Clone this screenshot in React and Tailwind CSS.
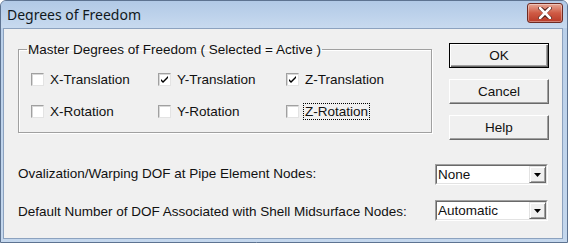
const CHECKS = [
  [
    { label: 'X-Translation', checked: false },
    { label: 'Y-Translation', checked: true },
    { label: 'Z-Translation', checked: true },
  ],
  [
    { label: 'X-Rotation', checked: false },
    { label: 'Y-Rotation', checked: false },
    { label: 'Z-Rotation', checked: false, focus: true },
  ],
];

function CheckBox({ label, checked, focus }) {
  return (
    <div className="flex items-center">
      <span className="w-[13px] h-[13px] border border-t-[#a0a0a0] border-l-[#a0a0a0] border-r-[#e3e3e3] border-b-[#e3e3e3] bg-white flex items-center justify-center shrink-0 shadow-[inset_1px_1px_0_#d8d8d8]">
        {checked && (
          <svg width="9" height="9" viewBox="0 0 9 9">
            <path d="M1 4 L3 6 L8 1 L8 3 L3 8 L1 6 Z" fill="#000" />
          </svg>
        )}
      </span>
      <span className={`ml-[5px] leading-[15px] px-[1px] ${focus ? 'outline outline-1 outline-dotted outline-black' : ''}`}>
        {label}
      </span>
    </div>
  );
}

function Button({ children, primary }) {
  return (
    <button
      className={`w-[100px] h-[25px] bg-[#f0f0f0] leading-none font-normal ${
        primary
          ? 'border border-black shadow-[inset_1px_1px_0_#fff,inset_-1px_-1px_0_#696969,inset_-2px_-2px_0_#a0a0a0]'
          : 'border border-t-white border-l-white border-r-[#696969] border-b-[#696969] shadow-[inset_-1px_-1px_0_#a0a0a0]'
      }`}
    >
      {children}
    </button>
  );
}

function Select({ value }) {
  return (
    <div className="w-[113px] h-[21px] flex border border-t-[#a0a0a0] border-l-[#a0a0a0] border-r-white border-b-white">
      <div className="flex-1 flex items-center bg-white border border-t-[#696969] border-l-[#696969] border-r-[#e3e3e3] border-b-[#e3e3e3]">
        <span className="flex-1 pl-[1px] leading-none">{value}</span>
        <span className="w-[17px] h-full bg-[#f0f0f0] flex items-center justify-center border border-t-[#e3e3e3] border-l-[#e3e3e3] border-r-[#696969] border-b-[#696969] shadow-[inset_1px_1px_0_#fff,inset_-1px_-1px_0_#a0a0a0]">
          <svg width="7" height="4" viewBox="0 0 7 4">
            <path d="M0 0 H7 L3.5 4 Z" fill="#000" />
          </svg>
        </span>
      </div>
    </div>
  );
}

export default function App() {
  return (
    <div className="w-[568px] h-[243px] flex flex-col bg-gradient-to-b from-[#b9cfe9] to-[#c4d7ed] border border-[#5d7391] rounded-t-[6px] overflow-hidden font-['Liberation_Sans',Arial,sans-serif] text-[13.5px] text-[#111]">
      <div className="h-[27px] flex items-center justify-between pl-[6px] pr-[4px] bg-gradient-to-b from-[#b1c9e6] to-[#c8daef]">
        <span className="font-['Noto_Sans',sans-serif] text-[14px] text-[#101820]">Degrees of Freedom</span>
        <div className="w-[36px] h-[20px] mt-[-3px] rounded-[3px] border border-[#6e2a22] bg-gradient-to-b from-[#e4a796] via-[#cf5a44] to-[#b83a28] flex items-center justify-center shadow-[inset_0_0_0_1px_rgba(255,255,255,0.35)]">
          <svg width="14" height="12" viewBox="0 0 14 12">
            <path d="M2 1 L7 5 L12 1 M2 11 L7 7 L12 11 M7 5 L7 7" stroke="#4a1a14" strokeWidth="4" fill="none" strokeLinecap="round" />
            <path d="M2 1 L12 11 M12 1 L2 11" stroke="#fff" strokeWidth="2.6" fill="none" strokeLinecap="round" />
          </svg>
        </div>
      </div>

      <div className="flex-1 ml-[2px] mr-[4px] mb-[3px] border border-[#8ca2bf] bg-[#f0f0f0] flex flex-col pl-[14px]">
        <div className="flex items-start pt-[13px]">
          <fieldset className="w-[414px] h-[91px] border border-[#a0a0a0] shadow-[1px_1px_0_#fff,inset_1px_1px_0_#fff] p-0">
            <legend className="ml-[8px] px-[1px] leading-[15px]">Master Degrees of Freedom ( Selected = Active )</legend>
            <div className="pl-[12px] pt-[6px] flex flex-col">
              {CHECKS.map((row, i) => (
                <div key={i} className="h-[32px] grid grid-cols-[127px_128px_auto] items-center">
                  {row.map((c) => (
                    <CheckBox key={c.label} {...c} />
                  ))}
                </div>
              ))}
            </div>
          </fieldset>
          <div className="ml-[17px] mt-[1px] flex flex-col gap-[11px]">
            <Button primary>OK</Button>
            <Button>Cancel</Button>
            <Button>Help</Button>
          </div>
        </div>

        <div className="mt-[24px] flex items-center w-[530px] justify-between">
          <span>Ovalization/Warping DOF at Pipe Element Nodes:</span>
          <Select value="None" />
        </div>
        <div className="mt-[14px] flex items-center w-[530px] justify-between">
          <span className="mt-[3px]">Default Number of DOF Associated with Shell Midsurface Nodes:</span>
          <Select value="Automatic" />
        </div>
      </div>
    </div>
  );
}
